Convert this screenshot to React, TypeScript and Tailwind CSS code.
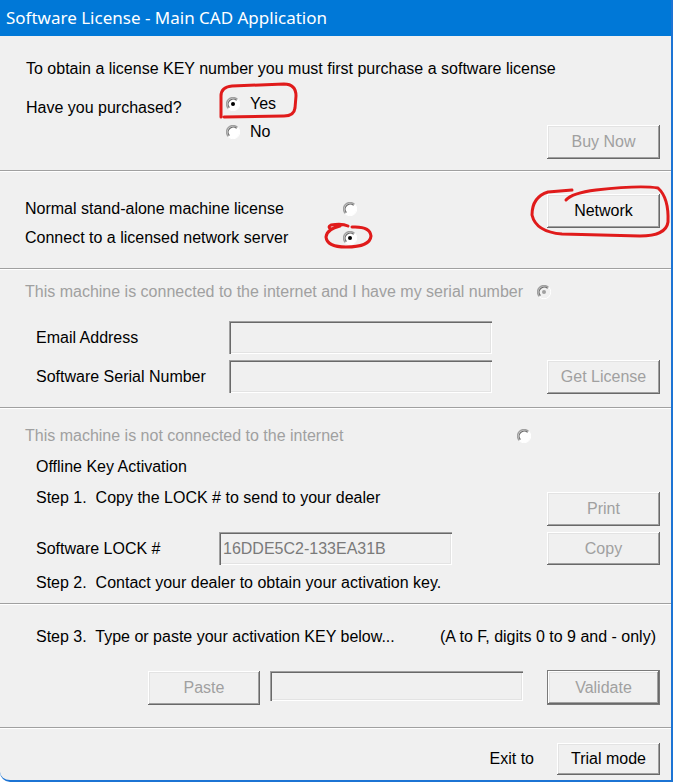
import React from "react";

function Radio({ checked = false, disabled = false }: { checked?: boolean; disabled?: boolean }) {
  return (
    <svg width="14" height="14" viewBox="0 0 14 14" className="shrink-0">
      <circle cx="7" cy="7" r="6.5" fill={disabled ? "#f0f0f0" : "#ffffff"} />
      <path d="M2.4 11.6 A6.5 6.5 0 0 1 11.6 2.4" fill="none" stroke="#a0a0a0" strokeWidth="1.4" />
      <path d="M3.4 10.6 A5.1 5.1 0 0 1 10.6 3.4" fill="none" stroke="#6a6a6a" strokeWidth="1.2" />
      <path d="M11.8 2.2 A6.7 6.7 0 0 1 2.2 11.8" fill="none" stroke="#ffffff" strokeWidth="1" />
      {checked && <circle cx="7" cy="7" r="2" fill={disabled ? "#a0a0a0" : "#000000"} />}
    </svg>
  );
}

function Btn({
  children,
  disabled = false,
  className = "",
}: {
  children: React.ReactNode;
  disabled?: boolean;
  className?: string;
}) {
  return (
    <div
      className={`flex shrink-0 items-center justify-center bg-[#f0f0f0] shadow-[inset_-1px_-1px_#696969,inset_1px_1px_#ffffff,inset_-2px_-2px_#a0a0a0,inset_2px_2px_#e3e3e3] ${
        disabled ? "text-[#a0a0a0]" : "text-black"
      } ${className}`}
    >
      {children}
    </div>
  );
}

function Field({ className = "", children }: { className?: string; children?: React.ReactNode }) {
  return (
    <div
      className={`flex shrink-0 items-center bg-[#f0f0f0] shadow-[inset_1px_1px_#a0a0a0,inset_2px_2px_#696969,inset_-1px_-1px_#ffffff,inset_-2px_-2px_#e3e3e3] ${className}`}
    >
      {children}
    </div>
  );
}

function Sep() {
  return <div className="h-[2px] shrink-0 border-t border-t-[#a0a0a0] border-b border-b-white" />;
}

export default function App() {
  return (
    <div className="relative h-[784px] w-[673px] overflow-hidden bg-white font-['Liberation_Sans',Arial,sans-serif] text-[16px] leading-[20px] text-black">
      <div className="flex h-[782px] w-[673px] flex-col overflow-hidden rounded-bl-[10px] border-r-2 border-b-2 border-[#1c74d4] bg-[#f0f0f0]">
        <div className="flex h-[36px] shrink-0 items-center bg-[#0078d7] pl-[6px] font-['Noto_Sans',sans-serif] text-[17px] text-white">
          Software License - Main CAD Application
        </div>

        {/* Section 1 */}
        <div className="h-[134px] shrink-0 pl-[26px] pr-[11px] pt-[23px]">
          <div>To obtain a license KEY number you must first purchase a software license</div>
          <div className="mt-[11px] flex items-start">
            <div className="mt-[8px] w-[200px]">Have you purchased?</div>
            <div className="flex flex-col">
              <div className="flex h-[28px] items-center gap-[10px]">
                <Radio checked />
                <span>Yes</span>
              </div>
              <div className="flex h-[28px] items-center gap-[10px]">
                <Radio />
                <span>No</span>
              </div>
            </div>
            <Btn disabled className="ml-auto mt-[35px] h-[34px] w-[113px]">
              Buy Now
            </Btn>
          </div>
        </div>
        <Sep />

        {/* Section 2 */}
        <div className="flex h-[96px] shrink-0 items-start pl-[25px] pr-[11px] pt-[22px]">
          <div className="flex flex-col">
            <div className="flex h-[29px] items-center">
              <span className="w-[318px]">Normal stand-alone machine license</span>
              <Radio />
            </div>
            <div className="flex h-[29px] items-center">
              <span className="w-[318px]">Connect to a licensed network server</span>
              <Radio checked />
            </div>
          </div>
          <Btn className="ml-auto h-[34px] w-[113px]">Network</Btn>
        </div>
        <Sep />

        {/* Section 3 */}
        <div className="h-[137px] shrink-0 pl-[25px] pr-[11px] pt-[12px]">
          <div className="flex h-[20px] items-center">
            <span className="w-[512px] text-[#a0a0a0]">This machine is connected to the internet and I have my serial number</span>
            <Radio checked disabled />
          </div>
          <div className="mt-[19px] pl-[11px]">
            <div className="flex h-[33px] items-center">
              <span className="w-[193px]">Email Address</span>
              <Field className="h-[33px] w-[263px]" />
            </div>
            <div className="mt-[6px] flex h-[33px] items-center">
              <span className="w-[193px]">Software Serial Number</span>
              <Field className="h-[33px] w-[263px]" />
              <Btn disabled className="ml-auto h-[34px] w-[113px]">
                Get License
              </Btn>
            </div>
          </div>
        </div>
        <Sep />

        {/* Section 4 */}
        <div className="h-[194px] shrink-0 pl-[25px] pr-[11px] pt-[17px]">
          <div className="flex h-[20px] items-center">
            <span className="w-[492px] text-[#a0a0a0]">This machine is not connected to the internet</span>
            <Radio />
          </div>
          <div className="pl-[11px]">
            <div className="mt-[11px]">Offline Key Activation</div>
            <div className="mt-[11px] flex items-start">
              <span>Step 1.&nbsp; Copy the LOCK # to send to your dealer</span>
              <Btn disabled className="ml-auto mt-[4px] h-[34px] w-[113px]">
                Print
              </Btn>
            </div>
            <div className="mt-[6px] flex h-[33px] items-center">
              <span className="w-[183px]">Software LOCK #</span>
              <Field className="h-[33px] w-[233px] pl-[4px] text-[#7a7a7a]">16DDE5C2-133EA31B</Field>
              <Btn disabled className="ml-auto h-[33px] w-[113px]">
                Copy
              </Btn>
            </div>
            <div className="mt-[8px]">Step 2.&nbsp; Contact your dealer to obtain your activation key.</div>
          </div>
        </div>
        <Sep />

        {/* Section 5 */}
        <div className="h-[122px] shrink-0 pr-[11px] pt-[22px]">
          <div className="flex justify-between pl-[36px] pr-[4px]">
            <span>Step 3.&nbsp; Type or paste your activation KEY below...</span>
            <span>(A to F, digits 0 to 9 and - only)</span>
          </div>
          <div className="mt-[24px] flex items-start justify-end">
            <Btn disabled className="h-[34px] w-[112px]">
              Paste
            </Btn>
            <Field className="ml-[10px] h-[30px] w-[253px]" />
            <div className="ml-[24px] -mt-[1px] border border-[#7a7a7a]">
              <Btn disabled className="h-[33px] w-[111px]">
                Validate
              </Btn>
            </div>
          </div>
        </div>
        <Sep />

        {/* Section 6 */}
        <div className="flex flex-1 items-start justify-end pr-[11px] pt-[14px]">
          <span className="mr-[23px] mt-[6px]">Exit to</span>
          <Btn className="h-[32px] w-[103px]">Trial mode</Btn>
        </div>
      </div>

      {/* red hand-drawn annotations */}
      <svg className="pointer-events-none absolute left-0 top-0" width="673" height="784" viewBox="0 0 673 784">
        <g fill="none" stroke="#e01b1b" strokeWidth="3" strokeLinecap="round" strokeLinejoin="round">
          <path d="M221 117 L221 96 Q221 87 232 86 L284 84 Q296 84 296 96 L295 108 Q294 116 284 116 L224 117" />
          <path d="M331 229 Q327 227 331 225 Q342 223 348 226 M340 226 Q327 229 326 237 Q327 247 346 247 Q370 247 371 236 Q370 226 352 227" />
          <path d="M566 200 Q572 193 596 190 Q640 185 658 188 Q669 198 668 222 Q666 236 640 236 L562 234 Q536 232 532 215 Q532 197 548 192 L572 190" />
        </g>
      </svg>
    </div>
  );
}
